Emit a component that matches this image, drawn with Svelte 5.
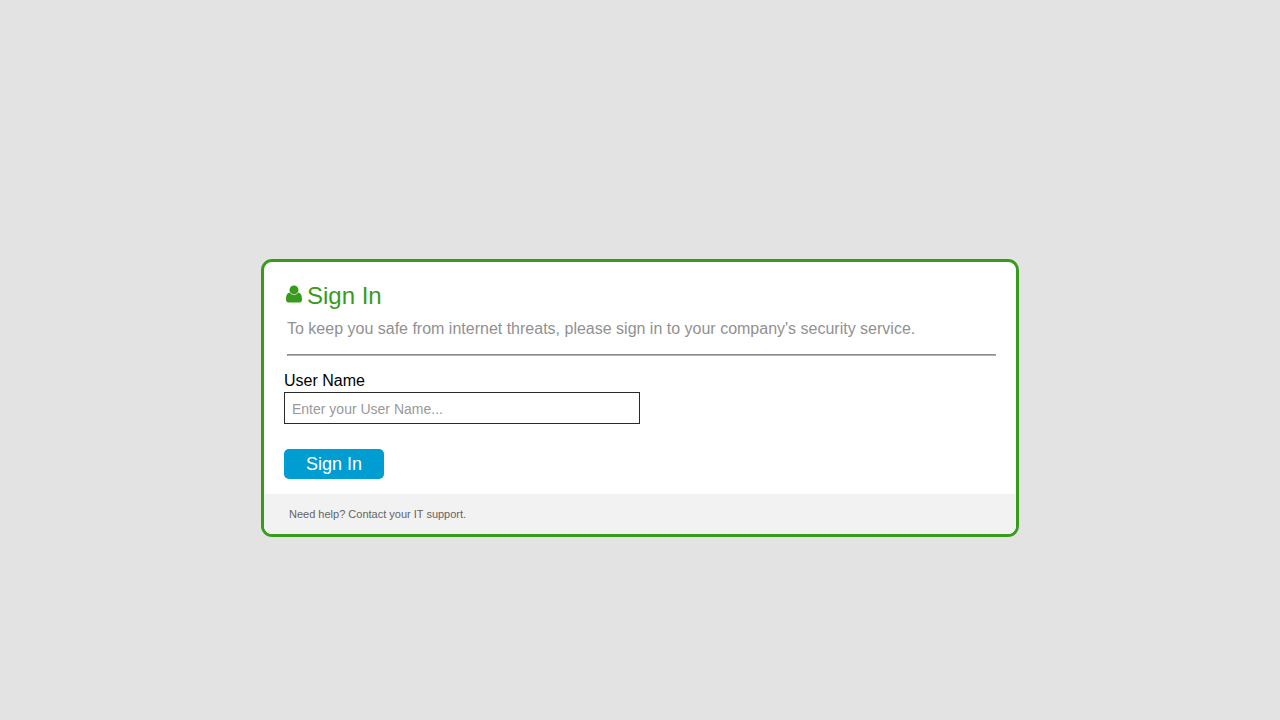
<script>
  let userName = $state('');
</script>

<main>
  <form class="card" onsubmit={(event) => event.preventDefault()}>
    <div class="body">
      <header>
        <h1>
          <svg viewBox="0 0 16 18" aria-hidden="true">
            <circle cx="8" cy="4.9" r="4.5" />
            <path
              d="M3.9 7.6C1.2 7.9 0 10.6 0 14.2C0 16.6 1.1 17.6 3 17.6H13C14.9 17.6 16 16.6 16 14.2C16 10.6 14.8 7.9 12.1 7.6C11.2 9.2 9.8 10 8 10C6.2 10 4.8 9.2 3.9 7.6Z"
            />
          </svg>
          <span>Sign In</span>
        </h1>
        <p>To keep you safe from internet threats, please sign in to your company's security service.</p>
        <hr />
      </header>
      <label for="user-name">User Name</label>
      <input id="user-name" type="text" placeholder="Enter your User Name..." bind:value={userName} />
      <button type="submit">Sign In</button>
    </div>
    <footer>Need help? Contact your IT support.</footer>
  </form>
</main>

<style>
  :global(body) {
    background: #e3e3e3;
  }

  main {
    display: flex;
    justify-content: center;
    padding: 259px 16px 16px;
    font-family: "Liberation Sans", Arial, sans-serif;
    font-size: 16px;
    line-height: 18px;
  }

  .card {
    box-sizing: border-box;
    width: 100%;
    max-width: 758px;
    overflow: hidden;
    background: #fff;
    border: 3px solid #389b1c;
    border-radius: 11px;
  }

  .body {
    display: flex;
    flex-direction: column;
    align-items: flex-start;
    padding: 20px 20px 15px;
  }

  header {
    box-sizing: border-box;
    width: 100%;
    padding-left: 3px;
  }

  h1 {
    display: flex;
    align-items: flex-start;
    gap: 5px;
    margin: 0 0 0 -1px;
    color: #389b1c;
    font-size: 24px;
    font-weight: 400;
    line-height: 28px;
  }

  svg {
    width: 16px;
    height: 18px;
    margin-top: 3px;
    fill: currentColor;
  }

  p {
    margin: 10px 0 16px;
    color: #919191;
  }

  hr {
    height: 0;
    margin: 0;
    border: 1px solid;
    border-color: #8c8c8c #b0b0b0 #b0b0b0 #8c8c8c;
  }

  label {
    margin: 16px 0 2px;
    color: #000;
  }

  input {
    box-sizing: border-box;
    width: 50%;
    height: 32px;
    padding: 2px 7px 0;
    background: #fff;
    border: 1px solid #2a2a2a;
    border-radius: 0;
    color: #2a2a2a;
    font: 14px "Liberation Sans", Arial, sans-serif;
  }

  input::placeholder {
    color: #999;
    opacity: 1;
  }

  button {
    width: 100px;
    height: 30px;
    margin-top: 25px;
    padding: 0;
    background: #009dd3;
    border: 0;
    border-radius: 5px;
    color: #fff;
    font: 18px "Liberation Sans", Arial, sans-serif;
    cursor: pointer;
  }

  footer {
    padding: 11px 25px;
    background: #f2f2f2;
    color: #646464;
    font-size: 11px;
  }
</style>
